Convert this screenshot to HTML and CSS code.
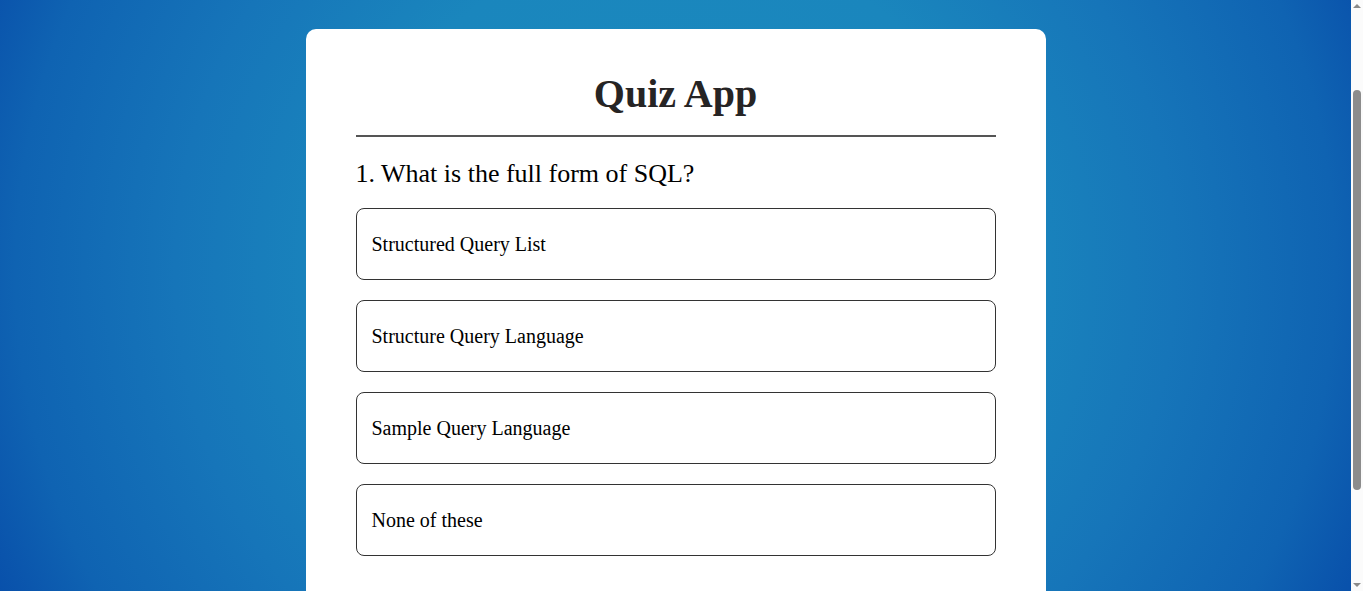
FILE: index.html
```html
<!DOCTYPE html>
<html lang="en">
<head>
<meta charset="UTF-8">
<title>Quiz App</title>
<link rel="stylesheet" href="styles.css">
</head>
<body>
<div class="viewport">
  <div class="app">
    <h1 class="title">Quiz App</h1>
    <div class="quiz">
      <h2 class="question">1. What is the full form of SQL?</h2>
      <div class="answers">
        <button class="btn">Structured Query List</button>
        <button class="btn">Structure Query Language</button>
        <button class="btn">Sample Query Language</button>
        <button class="btn">None of these</button>
      </div>
    </div>
  </div>
</div>
<div class="scrollbar" aria-hidden="true">
  <div class="sb-btn"><span class="arrow-up"></span></div>
  <div class="sb-space-top"></div>
  <div class="sb-thumb"></div>
  <div class="sb-space-bottom"></div>
  <div class="sb-btn"><span class="arrow-down"></span></div>
</div>
</body>
</html>
```
FILE: styles.css
```css
html, body {
  margin: 0;
  padding: 0;
  height: 100%;
}
body {
  display: flex;
  overflow: hidden;
  font-family: "Liberation Serif", "Times New Roman", serif;
}
.viewport {
  flex: 1;
  overflow: hidden;
  padding-top: 29px;
  background: radial-gradient(circle 820px at 50% 270px,
    #1b8bbe 0px,
    #1a86bd 330px,
    #1675b9 500px,
    #0f63b2 660px,
    #0a54ac 730px,
    #0548a8 790px,
    #0446a8 820px);
}
.app {
  background: #fff;
  width: 640px;
  margin: 0 auto;
  padding: 42px 50px 60px;
  border-radius: 10px;
}
.title {
  margin: 0;
  font-size: 40px;
  line-height: 46px;
  font-weight: bold;
  color: #262424;
  text-align: center;
  padding-bottom: 18px;
  border-bottom: 2px solid #555;
}
.question {
  margin: 22px 0 19px;
  font-size: 26px;
  line-height: 30px;
  font-weight: normal;
  color: #000;
}
.answers {
  display: flex;
  flex-direction: column;
  gap: 20px;
}
.btn {
  display: block;
  width: 100%;
  box-sizing: border-box;
  height: 72px;
  padding: 0 15px;
  background: #fff;
  border: 1px solid #333;
  border-radius: 8px;
  font-family: "Liberation Serif", "Times New Roman", serif;
  font-size: 20px;
  color: #000;
  text-align: left;
  cursor: pointer;
}
.scrollbar {
  width: 12px;
  flex: none;
  display: flex;
  flex-direction: column;
  background: #fbfbfb;
}
.sb-btn {
  height: 12px;
  display: flex;
  align-items: center;
  justify-content: center;
}
.arrow-up {
  width: 0;
  height: 0;
  border-left: 4px solid transparent;
  border-right: 4px solid transparent;
  border-bottom: 4px solid #8a8a8a;
}
.arrow-down {
  width: 0;
  height: 0;
  border-left: 4px solid transparent;
  border-right: 4px solid transparent;
  border-top: 4px solid #8a8a8a;
}
.sb-space-top {
  height: 78px;
}
.sb-thumb {
  height: 400px;
  margin: 0 2px;
  border-radius: 4px;
  background: #8c8c8c;
}
.sb-space-bottom {
  flex: 1;
}
```
